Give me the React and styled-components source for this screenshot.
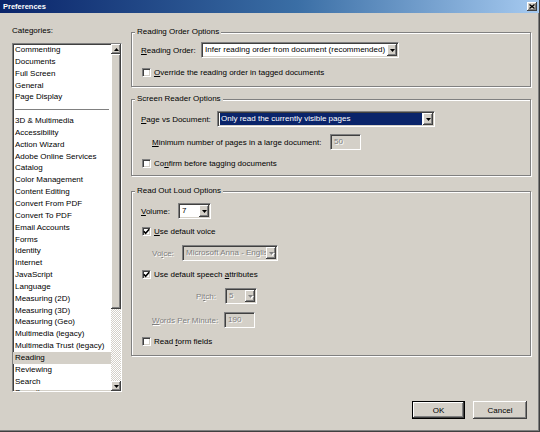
import React from 'react';
import styled, { createGlobalStyle } from 'styled-components';

const GlobalStyle = createGlobalStyle`
  html, body {
    margin: 0;
    padding: 0;
    background: #d4d0c8;
  }
  body {
    font-family: "Liberation Sans", Arial, sans-serif;
    font-size: 8px;
    color: #000;
  }
  * {
    box-sizing: border-box;
  }
`;

const raised = `
  background: #d4d0c8;
  box-shadow: inset -1px -1px #404040, inset 1px 1px #fff, inset -2px -2px #808080;
`;

const sunken = `
  border: 1px solid;
  border-color: #808080 #fff #fff #808080;
  box-shadow: inset 1px 1px #404040, inset -1px -1px #d4d0c8;
`;

const disabledText = `
  color: #808080;
  text-shadow: 1px 1px 0 #fff;
`;

const Window = styled.div`
  width: 540px;
  height: 432px;
  display: flex;
  flex-direction: column;
  background: #d4d0c8;
  border-right: 1px solid #404040;
  border-bottom: 1px solid #404040;
  box-shadow: inset -1px -1px #808080;
`;

const TitleBar = styled.div`
  height: 13px;
  flex: none;
  display: flex;
  align-items: center;
  justify-content: space-between;
  padding: 0 2px 0 3px;
  background: linear-gradient(to right, #0a246a, #3a6ea5 55%, #a6caf0);
`;

const Title = styled.span`
  color: #fff;
  font-weight: bold;
  font-size: 7.5px;
`;

const CloseButton = styled.div`
  width: 10px;
  height: 9px;
  display: flex;
  align-items: center;
  justify-content: center;
  ${raised}
`;

const Content = styled.div`
  flex: 1;
  display: flex;
  padding: 13px 8px 0 12px;
`;

const LeftColumn = styled.div`
  width: 110px;
  flex: none;
  display: flex;
  flex-direction: column;
`;

const CategoriesLabel = styled.div`
  height: 10px;
  line-height: 10px;
`;

const ListBox = styled.div`
  margin-top: 7px;
  height: 349px;
  display: flex;
  background: #fff;
  ${sunken}
`;

const Items = styled.div`
  flex: 1;
  min-width: 0;
  overflow: hidden;
`;

const Item = styled.div`
  height: 11.85px;
  line-height: 11.85px;
  padding-left: 2px;
  white-space: nowrap;
  background: ${p => (p.$selected ? '#d4d0c8' : 'transparent')};
`;

const Separator = styled.div`
  height: 11.85px;
  display: flex;
  align-items: center;
  padding: 0 2px;

  &::after {
    content: '';
    flex: 1;
    height: 1px;
    background: #808080;
  }
`;

const Scrollbar = styled.div`
  width: 10px;
  flex: none;
  display: flex;
  flex-direction: column;
  background: repeating-conic-gradient(#fff 0 25%, #d4d0c8 0 50%) 0 0 / 2px 2px;
`;

const ScrollButton = styled.div`
  height: 10px;
  flex: none;
  display: flex;
  align-items: center;
  justify-content: center;
  ${raised}
`;

const Thumb = styled.div`
  height: 255px;
  flex: none;
  ${raised}
`;

const Track = styled.div`
  flex: 1;
`;

const RightColumn = styled.div`
  flex: 1;
  margin: 1px 0 0 9px;
  display: flex;
  flex-direction: column;
`;

const Group = styled.fieldset`
  margin: ${p => p.$mt || 0}px 0 0;
  padding: 0 9px ${p => p.$pb}px;
  min-width: 0;
  border: 1px solid #808080;
  box-shadow: inset 1px 1px #fff, 1px 1px #fff;
`;

const Legend = styled.legend`
  padding: 0 2px;
  margin-left: -6px;
  line-height: 10px;
  background: #d4d0c8;
`;

const Row = styled.div`
  display: flex;
  align-items: center;
  height: ${p => p.$h || 16}px;
  margin-top: ${p => p.$mt || 0}px;
  padding-left: ${p => p.$indent || 0}px;
`;

const Label = styled.span`
  flex: none;
  width: ${p => p.$w}px;
  padding-right: ${p => p.$pr || 0}px;
  text-align: ${p => p.$align || 'left'};
  white-space: nowrap;
  ${p => (p.$disabled ? disabledText : '')}
`;

const Key = styled.span`
  text-decoration: underline;
  text-underline-offset: 1px;
`;

const SelectBox = styled.div`
  width: ${p => p.$w}px;
  height: 16px;
  flex: none;
  display: flex;
  padding: 1px;
  background: ${p => (p.$disabled ? '#d4d0c8' : '#fff')};
  ${sunken}
`;

const SelectText = styled.div`
  flex: 1;
  min-width: 0;
  overflow: hidden;
  white-space: nowrap;
  line-height: 12px;
  padding-left: ${p => (p.$highlight ? 1 : 2)}px;
  margin-left: ${p => (p.$highlight ? 1 : 0)}px;
  margin-right: ${p => (p.$highlight ? 1 : 0)}px;
  background: ${p => (p.$highlight ? '#0a246a' : 'transparent')};
  color: ${p => (p.$highlight ? '#fff' : '#000')};
  ${p => (p.$disabled ? disabledText : '')}
`;

const DropButton = styled.div`
  width: 10px;
  flex: none;
  display: flex;
  align-items: center;
  justify-content: center;
  ${raised}
`;

const InputBox = styled.div`
  width: ${p => p.$w}px;
  height: 16px;
  flex: none;
  padding: 1px 3px;
  line-height: 12px;
  background: #d4d0c8;
  ${sunken}
  ${disabledText}
`;

const CheckBox = styled.span`
  width: 9px;
  height: 9px;
  flex: none;
  margin-right: 3px;
  display: flex;
  align-items: center;
  justify-content: center;
  background: #fff;
  ${sunken}
`;

const Footer = styled.div`
  flex: none;
  display: flex;
  justify-content: flex-end;
  gap: 8px;
  padding: 0 12px 12px 0;
`;

const Button = styled.button`
  width: ${p => p.$w}px;
  height: 18px;
  padding: 0;
  font: inherit;
  color: #000;
  border: ${p => (p.$default ? '1px solid #000' : 'none')};
  ${raised}
`;

function Arrow({ up, disabled }) {
  const fill = disabled ? '#808080' : '#000';
  return (
    <svg width="5" height="3" viewBox="0 0 5 3" style={{ overflow: 'visible' }}>
      {disabled && <polygon points={up ? '1,4 6,4 3.5,1' : '1,1 6,1 3.5,4'} fill="#fff" />}
      <polygon points={up ? '0,3 5,3 2.5,0' : '0,0 5,0 2.5,3'} fill={fill} />
    </svg>
  );
}

function Select({ w, value, highlight, disabled }) {
  return (
    <SelectBox $w={w} $disabled={disabled}>
      <SelectText $highlight={highlight} $disabled={disabled}>{value}</SelectText>
      <DropButton>
        <Arrow disabled={disabled} />
      </DropButton>
    </SelectBox>
  );
}

function Check({ checked, children, mt }) {
  return (
    <Row $h={13} $mt={mt} $indent={1}>
      <CheckBox>
        {checked && (
          <svg width="7" height="7" viewBox="0 0 7 7">
            <polyline points="0.8,3.2 2.6,5.2 6.2,1.2" fill="none" stroke="#000" strokeWidth="1.6" />
          </svg>
        )}
      </CheckBox>
      <span>{children}</span>
    </Row>
  );
}

const topCategories = ['Commenting', 'Documents', 'Full Screen', 'General', 'Page Display'];
const categories = [
  '3D & Multimedia', 'Accessibility', 'Action Wizard', 'Adobe Online Services', 'Catalog',
  'Color Management', 'Content Editing', 'Convert From PDF', 'Convert To PDF', 'Email Accounts',
  'Forms', 'Identity', 'Internet', 'JavaScript', 'Language', 'Measuring (2D)', 'Measuring (3D)',
  'Measuring (Geo)', 'Multimedia (legacy)', 'Multimedia Trust (legacy)', 'Reading', 'Reviewing',
  'Search', 'Security',
];

export default function App() {
  return (
    <>
      <GlobalStyle />
      <Window>
        <TitleBar>
          <Title>Preferences</Title>
          <CloseButton>
            <svg width="6" height="5" viewBox="0 0 6 5">
              <path d="M0.5 0.5 L5.5 4.5 M5.5 0.5 L0.5 4.5" stroke="#000" strokeWidth="1.3" />
            </svg>
          </CloseButton>
        </TitleBar>

        <Content>
          <LeftColumn>
            <CategoriesLabel>Categories:</CategoriesLabel>
            <ListBox>
              <Items>
                {topCategories.map(c => <Item key={c}>{c}</Item>)}
                <Separator />
                {categories.map(c => (
                  <Item key={c} $selected={c === 'Reading'}>{c}</Item>
                ))}
              </Items>
              <Scrollbar>
                <ScrollButton><Arrow up /></ScrollButton>
                <Thumb />
                <Track />
                <ScrollButton><Arrow /></ScrollButton>
              </Scrollbar>
            </ListBox>
          </LeftColumn>

          <RightColumn>
            <Group $pb={7}>
              <Legend>Reading Order Options</Legend>
              <Row $mt={5}>
                <Label $w={60}><Key>R</Key>eading Order:</Label>
                <Select w={198} value="Infer reading order from document (recommended)" />
              </Row>
              <Check mt={8}><Key>O</Key>verride the reading order in tagged documents</Check>
            </Group>

            <Group $mt={7} $pb={5}>
              <Legend>Screen Reader Options</Legend>
              <Row $mt={7}>
                <Label $w={76}><Key>P</Key>age vs Document:</Label>
                <Select w={218} value="Only read the currently visible pages" highlight />
              </Row>
              <Row $mt={7} $indent={11}>
                <Label $w={178}><Key>M</Key>inimum number of pages in a large document:</Label>
                <InputBox $w={31}>50</InputBox>
              </Row>
              <Check mt={7}>Co<Key>n</Key>firm before tagging documents</Check>
            </Group>

            <Group $mt={10} $pb={7}>
              <Legend>Read Out Loud Options</Legend>
              <Row $mt={7}>
                <Label $w={37}><Key>V</Key>olume:</Label>
                <Select w={33} value="7" />
              </Row>
              <Check checked mt={6}><Key>U</Key>se default voice</Check>
              <Row $mt={7} $indent={11}>
                <Label $w={30} $disabled>Vo<Key>i</Key>ce:</Label>
                <Select w={96} value="Microsoft Anna - English (United States)" disabled />
              </Row>
              <Check checked mt={7}>Use default speech <Key>a</Key>ttributes</Check>
              <Row $mt={7} $indent={11}>
                <Label $w={73} $pr={9} $align="right" $disabled>Pi<Key>t</Key>ch:</Label>
                <Select w={32} value="5" disabled />
              </Row>
              <Row $mt={8} $indent={11}>
                <Label $w={72} $disabled><Key>W</Key>ords Per Minute:</Label>
                <InputBox $w={31}>190</InputBox>
              </Row>
              <Check mt={7}>Read <Key>f</Key>orm fields</Check>
            </Group>
          </RightColumn>
        </Content>

        <Footer>
          <Button $w={53} $default>OK</Button>
          <Button $w={54}>Cancel</Button>
        </Footer>
      </Window>
    </>
  );
}
